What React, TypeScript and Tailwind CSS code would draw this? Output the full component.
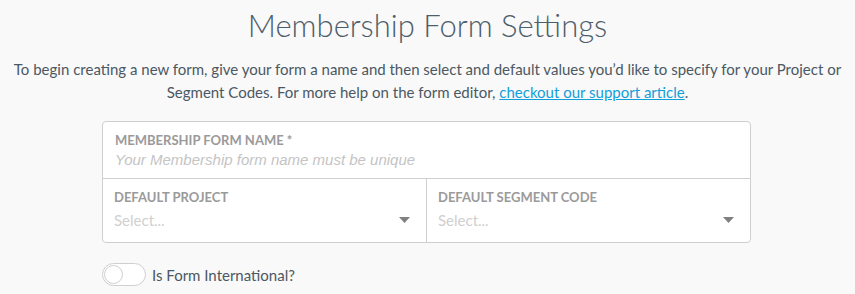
function Caret() {
  return (
    <svg width="11" height="6" viewBox="0 0 11 6" className="shrink-0">
      <path d="M0 0h11L5.5 6z" fill="#808080" />
    </svg>
  )
}

export default function App() {
  return (
    <div className="min-h-[294px] w-[855px] bg-[#f9f9f9] font-['Lato',sans-serif] text-[#4b5863]">
      <h1 className="pt-[5px] text-center text-[31px] font-light leading-[40px] text-[#4d5d69]">
        Membership Form Settings
      </h1>

      <p className="mt-[13px] px-[8px] text-center text-[15px] leading-[23px]">
        To begin creating a new form, give your form a name and then select and default values you’d like to specify for your Project or Segment Codes. For more help on the form editor,{" "}
        <a href="#" className="text-[#139ed9] underline">checkout our support article</a>.
      </p>

      {/* form box */}
      <div className="ml-[102px] mt-[17px] w-[649px] rounded-[4px] border border-[#cfcfcf] bg-white">
        <div className="h-[57px] border-b border-[#cfcfcf] px-[12px] pt-[10px]">
          <div className="text-[13px] font-bold uppercase leading-[16px] text-[#9a9a9a]">Membership Form Name *</div>
          <div className="mt-[3px] font-['Liberation_Sans',sans-serif] text-[15px] italic leading-[18px] text-[#c4c4c4]">
            Your Membership form name must be unique
          </div>
        </div>
        <div className="flex h-[63px]">
          <div className="flex-1 border-r border-[#cfcfcf] pl-[11px] pr-[16px] pt-[10px]">
            <div className="text-[13px] font-bold uppercase leading-[16px] text-[#9a9a9a]">Default Project</div>
            <div className="mt-[6px] flex items-center justify-between">
              <span className="text-[15px] leading-[18px] text-[#cfcfcf]">Select...</span>
              <Caret />
            </div>
          </div>
          <div className="flex-1 pl-[11px] pr-[16px] pt-[10px]">
            <div className="text-[13px] font-bold uppercase leading-[16px] text-[#9a9a9a]">Default Segment Code</div>
            <div className="mt-[6px] flex items-center justify-between">
              <span className="text-[15px] leading-[18px] text-[#cfcfcf]">Select...</span>
              <Caret />
            </div>
          </div>
        </div>
      </div>

      {/* toggle */}
      <div className="ml-[102px] mt-[20px] flex items-center gap-[6px]">
        <div className="flex h-[23px] w-[44px] items-center rounded-full border border-[#cfcfcf] bg-white pl-[1px]">
          <div className="h-[19px] w-[19px] rounded-full border border-[#cfcfcf] bg-white" />
        </div>
        <span className="text-[15px] leading-[20px]">Is Form International?</span>
      </div>
    </div>
  )
}
